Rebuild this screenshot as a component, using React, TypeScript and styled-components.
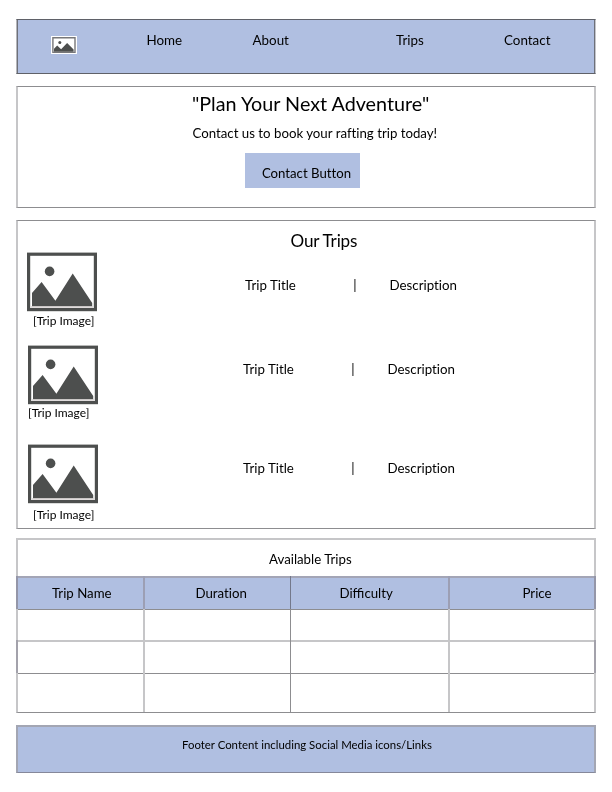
import React from 'react';
import styled, { createGlobalStyle } from 'styled-components';

const blue = '#b0bfe1';
const hard = '#8d8d90';
const soft = '#c6c6c8';
const ink = '#4d4f4e';

const GlobalStyle = createGlobalStyle`
  *, *::before, *::after { box-sizing: border-box; }
  body { margin: 0; background: #fff; color: #000; font-family: Lato, "Noto Sans", sans-serif; font-variant-ligatures: none; }
  h1, h2, p, figure { margin: 0; font-weight: 400; }
`;

const Page = styled.div`
  width: 612px;
  height: 792px;
  padding: 19px 16px 0;
  display: flex;
  flex-direction: column;
  overflow: hidden;
  will-change: transform;
`;

const Header = styled.header`
  height: 55px;
  border: 1px solid #5f6168;
  border-left: 1px solid #b4b5ba;
  border-right: 1px solid #c4c5cb;
  background: ${blue};
  box-shadow: inset 1px 0 #6d7079, inset -1px 0 #6d7079;
  display: grid;
  grid-template-columns: 129.5px 106px 143.5px 108px 1fr;
  padding-top: 10px;
  align-items: start;
`;

const Logo = styled.svg`
  display: block;
  margin: 6px 0 0 34px;
`;

const NavLink = styled.a`
  font-size: 13.4px;
  line-height: 20px;
`;

const Panel = styled.section`
  border: 1px solid ${hard};
  border-left: 2px solid ${soft};
  border-right: 2px solid ${soft};
`;

const Hero = styled(Panel)`
  height: 122px;
  margin-top: 12px;
  padding-left: 174px;
  display: flex;
  flex-direction: column;
  align-items: flex-start;
`;

const HeroTitle = styled.h1`
  margin-top: 5px;
  font-size: 19.75px;
  line-height: 24px;
  white-space: nowrap;
`;

const HeroText = styled.p`
  margin-top: 7px;
  padding-left: 0.5px;
  font-size: 13.25px;
  line-height: 20px;
  white-space: nowrap;
`;

const Button = styled.button`
  width: 115px;
  height: 35px;
  margin: 10px 0 0 53.4px;
  padding: 10px 0 5px 16.5px;
  border: 0;
  background: ${blue};
  color: #000;
  font: 13.2px/20px Lato, "Noto Sans", sans-serif;
  font-variant-ligatures: none;
  text-align: left;
`;

const Trips = styled(Panel)`
  height: 309px;
  margin-top: 12px;
`;

const TripsTitle = styled.h2`
  height: 31px;
  padding: 8px 0 0 272.6px;
  font-size: 17.1px;
  line-height: 24px;
  letter-spacing: -0.2px;
`;

const TripRow = styled.article<{ $height: number; $left: number; $textTop: number; $textLeft: number }>`
  height: ${p => p.$height}px;
  padding-left: ${p => p.$left}px;
  display: grid;
  grid-template-columns: ${p => p.$textLeft - p.$left}px 108.3px 36.2px 1fr;
  & > span { margin-top: ${p => p.$textTop}px; }
`;

const Figure = styled.figure`
  display: flex;
  flex-direction: column;
  align-items: flex-start;
`;

const Caption = styled.figcaption<{ $indent: number; $gap: number }>`
  margin: ${p => p.$gap}px 0 0 ${p => p.$indent}px;
  font-size: 12px;
  line-height: 18px;
  white-space: nowrap;
`;

const TripText = styled.span`
  font-size: 13.3px;
  line-height: 20px;
`;

const Available = styled(Panel)`
  height: 175px;
  margin-top: 9px;
  border-top: 2px solid ${soft};
  display: flex;
  flex-direction: column;
`;

const TableTitle = styled.h2`
  height: 36px;
  padding: 9px 0 0 251px;
  font-size: 13.25px;
  line-height: 20px;
`;

const Row = styled.div<{ $height: number; $line: 'soft' | 'hard'; $head?: boolean; $strong?: boolean }>`
  height: ${p => p.$height}px;
  margin: 0 -2px;
  border: 0 solid ${p => (p.$head ? '#9496a8' : p.$strong ? '#a3a2ab' : 'transparent')};
  border-width: 0 2px;
  background: ${p => (p.$head ? blue : 'transparent')};
  display: grid;
  grid-template-columns: 127px 146px 159px 1fr;
  box-shadow: inset 0 ${p => (p.$line === 'soft' ? `2px ${p.$head ? '#a3a5b6' : soft}` : `1px ${hard}`)};
`;

const Cell = styled.div<{ $rule?: 'soft' | 'hard'; $head?: boolean; $indent?: number }>`
  padding: ${p => (p.$head ? 7 : 0)}px 0 0 ${p => p.$indent ?? 0}px;
  border-right: ${p =>
    p.$rule === 'soft' ? `2px solid ${p.$head ? '#9c9fb4' : soft}` : p.$rule === 'hard' ? `1px solid ${p.$head ? '#73788b' : hard}` : '0'};
  font-size: 13.25px;
  line-height: 20px;
`;

const Footer = styled.footer`
  height: 48px;
  margin-top: 12px;
  padding: 8px 0 0 164px;
  border: 2px solid #a3a6b3;
  border-bottom: 1px solid #85889a;
  background: ${blue};
  font-size: 11.4px;
  line-height: 20px;
  white-space: nowrap;
`;

const Ligated = styled.span`
  font-variant-ligatures: common-ligatures;
`;

const Photo = styled.svg`
  display: block;
  overflow: visible;
`;

const TripImage = () => (
  <Photo width="70" height="59" viewBox="0 -0.6 70 59" aria-label="Trip image">
    <rect x="1.6" y="1.6" width="66.8" height="55.4" fill="#fff" stroke={ink} strokeWidth="3.2" />
    <circle cx="22.6" cy="18.8" r="4.8" fill={ink} />
    <path d="M5 40.5 14.6 29.5 28.4 48.2 45.7 21 65.2 50.5V53.6H5Z" fill={ink} />
    <path d="M4 54.4H66" stroke="#c2baba" />
  </Photo>
);

const trips = [
  { height: 93, left: 9, textTop: 23, textLeft: 227, indent: 6, gap: 1 },
  { height: 99, left: 10, textTop: 14, textLeft: 225, indent: 0, gap: 0 },
  { height: 80, left: 10, textTop: 14, textLeft: 225, indent: 5, gap: 3 },
];

const columns = [
  { label: 'Trip Name', indent: 34, rule: 'soft' },
  { label: 'Duration', indent: 50.5, rule: 'hard' },
  { label: 'Difficulty', indent: 48.5, rule: 'soft' },
  { label: 'Price', indent: 72.5, rule: undefined },
] as const;

const rows = [
  { height: 31, line: 'hard', strong: false },
  { height: 33, line: 'soft', strong: true },
  { height: 39, line: 'hard', strong: false },
] as const;

export default function App() {
  return (
    <Page>
      <GlobalStyle />
      <Header>
        <Logo width="26" height="18" viewBox="0 0 26 18" aria-label="Logo">
          <path d="M0 0H26V18H0Z" fill="#fff" />
          <path d="M1.9 1.7H24V16.4H1.9Z" fill="#fff" stroke="#777779" strokeWidth="1.4" />
          <circle cx="8.8" cy="6.4" r="1.5" fill={ink} />
          <path d="M3 12.8 6.2 9.6 10.1 13.2 16.1 7.1 22.6 13.6V15.7H3Z" fill={ink} />
        </Logo>
        <NavLink>Home</NavLink>
        <NavLink>About</NavLink>
        <NavLink>Trips</NavLink>
        <NavLink>Contact</NavLink>
      </Header>

      <Hero>
        <HeroTitle>"Plan Your Next Adventure"</HeroTitle>
        <HeroText>Contact us to book your rafting trip today!</HeroText>
        <Button>Contact Button</Button>
      </Hero>

      <Trips>
        <TripsTitle>Our Trips</TripsTitle>
        {trips.map((t, i) => (
          <TripRow key={i} $height={t.height} $left={t.left} $textTop={t.textTop} $textLeft={t.textLeft}>
            <Figure>
              <TripImage />
              <Caption $indent={t.indent} $gap={t.gap}>[Trip Image]</Caption>
            </Figure>
            <TripText>Trip Title</TripText>
            <TripText>|</TripText>
            <TripText>Description</TripText>
          </TripRow>
        ))}
      </Trips>

      <Available>
        <TableTitle>Available Trips</TableTitle>
        <Row $height={33} $line="soft" $head>
          {columns.map(c => (
            <Cell key={c.label} $head $rule={c.rule} $indent={c.indent}>
              {c.label === 'Difficulty' ? <Ligated>{c.label}</Ligated> : c.label}
            </Cell>
          ))}
        </Row>
        {rows.map((r, i) => (
          <Row key={i} $height={r.height} $line={r.line} $strong={r.strong}>
            {columns.map(c => <Cell key={c.label} $rule={c.rule} />)}
          </Row>
        ))}
      </Available>

      <Footer>Footer Content including Social Media icons/Links</Footer>
    </Page>
  );
}
